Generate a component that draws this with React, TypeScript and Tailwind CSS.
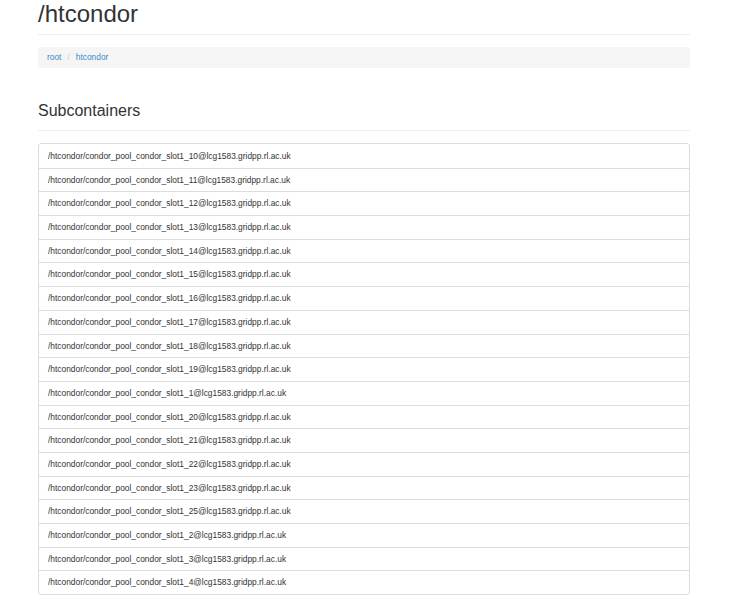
const slots = ["10", "11", "12", "13", "14", "15", "16", "17", "18", "19", "1", "20", "21", "22", "23", "25", "2", "3", "4"];

export default function App() {
  return (
    <div className="px-[38px] text-[#333]" style={{ fontFamily: '"Liberation Sans", Arial, sans-serif' }}>
      <h1 className="w-[652px] text-[24px] font-medium leading-[26px] pt-[1px] pb-[7px] border-b border-[#eee]">/htcondor</h1>
      <div className="mt-[12px] w-[652px] h-[21px] flex items-center px-[9px] rounded-[3px] bg-[#f5f5f5] text-[8.4px]">
        <span className="text-[#428bca]">root</span>
        <span className="text-[#ccc] px-[6px]">/</span>
        <span className="text-[#428bca]">htcondor</span>
      </div>
      <h2 className="mt-[33px] w-[652px] text-[16px] font-medium leading-[20px] pb-[9px] border-b border-[#eee]">Subcontainers</h2>
      <div className="mt-[12px] w-[652px] border border-[#ddd] rounded-[3px]">
        {slots.map((s, i) => (
          <div
            key={s}
            className={`h-[23.7px] flex items-center px-[9px] text-[8.4px] ${i > 0 ? "border-t border-[#ddd]" : ""}`}
          >
            /htcondor/condor_pool_condor_slot1_{s}@lcg1583.gridpp.rl.ac.uk
          </div>
        ))}
      </div>
    </div>
  );
}
